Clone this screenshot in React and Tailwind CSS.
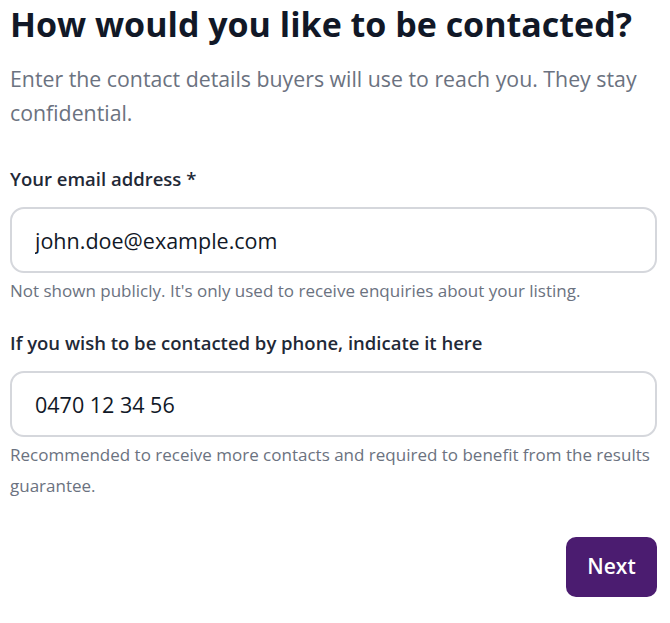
import React, { useState } from 'react';

function Field({ label, value, onChange, hint, type = 'text', className = '' }) {
  return (
    <div className={`flex flex-col ${className}`}>
      <label className="text-[18.5px] font-semibold leading-[26px] text-[#1f2937]">{label}</label>
      <input
        type={type}
        value={value}
        onChange={(e) => onChange(e.target.value)}
        className="mt-[15px] h-[66px] w-full rounded-[14px] border-2 border-[#d5d7dc] bg-white px-[23px] text-[21.5px] text-[#111827] outline-none"
      />
      <p className="mt-[2px] text-[17px] leading-[31px] text-[#6b7280]">{hint}</p>
    </div>
  );
}

export default function App() {
  const [email, setEmail] = useState('john.doe@example.com');
  const [phone, setPhone] = useState('0470 12 34 56');

  return (
    <div
      className="min-h-screen bg-white pl-[10px] pr-[13px] pt-[2px]"
      style={{ fontFamily: '"Open Sans", sans-serif' }}
    >
      <h1 className="text-[34px] font-bold leading-[44px] text-[#111827]">How would you like to be contacted?</h1>
      <p className="mt-[16px] text-[21.3px] leading-[34px] text-[#6b7280]">
        Enter the contact details buyers will use to reach you. They stay confidential.
      </p>

      <Field
        className="mt-[36px]"
        label="Your email address *"
        value={email}
        onChange={setEmail}
        hint="Not shown publicly. It's only used to receive enquiries about your listing."
        type="email"
      />
      <Field
        className="mt-[24px]"
        label="If you wish to be contacted by phone, indicate it here"
        value={phone}
        onChange={setPhone}
        hint="Recommended to receive more contacts and required to benefit from the results guarantee."
        type="tel"
      />

      <div className="mt-[36px] flex justify-end">
        <button className="h-[60px] w-[91px] rounded-[10px] bg-[#4b1c70] text-[21px] font-semibold text-white">Next</button>
      </div>
    </div>
  );
}
